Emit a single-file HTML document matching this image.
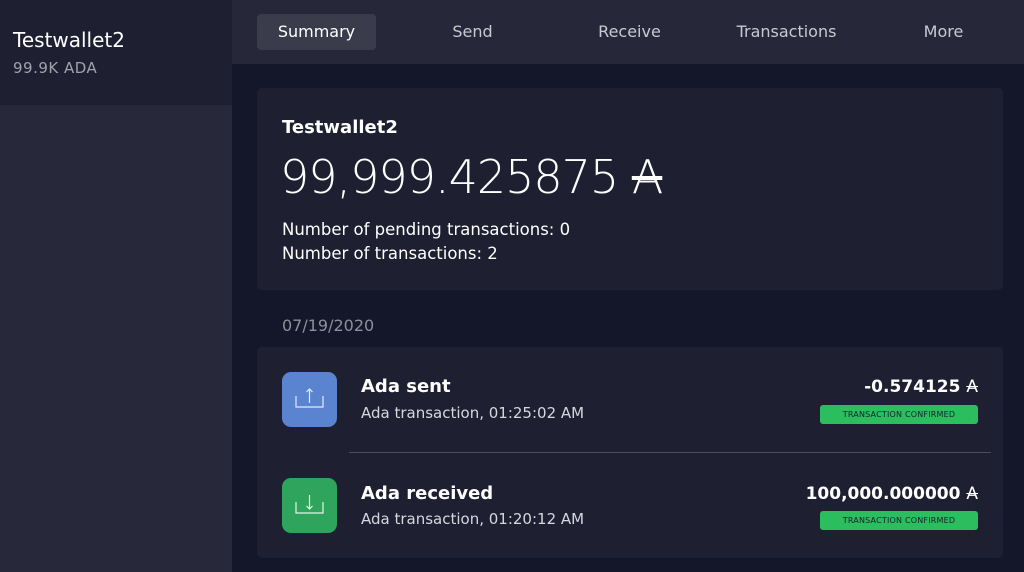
<!DOCTYPE html><html><head><style>
*{margin:0;padding:0;box-sizing:border-box}
body{width:1024px;height:572px;overflow:hidden;background:#14162a;font-family:"DejaVu Sans","Liberation Sans",sans-serif;color:#fff;position:relative}
.side{position:absolute;left:0;top:0;width:232px;height:572px;background:#27283a}
.sel{position:absolute;left:0;top:0;width:232px;height:105px;background:#1e1f31}
.nav{position:absolute;left:232px;top:0;width:792px;height:64px;background:#262839}
.tab{position:absolute;top:14px;height:36px;line-height:36px;font-size:16px;color:#c8c9d2;text-align:center}
.card{position:absolute;background:#1e2032;border-radius:5px}
.ic{position:absolute;left:282px;width:55px;height:55px;border-radius:9px}
.badge{position:absolute;right:46px;width:158px;height:19px;background:#2bbd5e;border-radius:3px;color:#1b2030;font-size:8px;text-align:center;line-height:19px;letter-spacing:.2px}
.amt{position:absolute;right:46px;font-size:17px;font-weight:bold;text-align:right}
</style></head><body>
<div class="side"></div><div class="sel"></div>
<div style="position:absolute;left:13px;top:28px;font-size:20px">Testwallet2</div>
<div style="position:absolute;left:13px;top:59px;font-size:15px;color:#a0a2ad;letter-spacing:.5px">99.9K ADA</div>
<div class="nav"></div>
<div class="tab" style="left:257px;width:119px;background:#3a3c4c;border-radius:4px;color:#fff">Summary</div>
<div class="tab" style="left:413px;width:119px">Send</div>
<div class="tab" style="left:570px;width:119px">Receive</div>
<div class="tab" style="left:727px;width:119px">Transactions</div>
<div class="tab" style="left:884px;width:119px">More</div>
<div class="card" style="left:257px;top:88px;width:746px;height:202px"></div>
<div style="position:absolute;left:282px;top:117px;font-size:18px;font-weight:bold">Testwallet2</div>
<div style="position:absolute;left:280px;top:150px;font-size:46px;font-weight:200;letter-spacing:-1px">99,999.425875 <span style="text-decoration:line-through">A</span></div>
<div style="position:absolute;left:282px;top:218px;font-size:16.5px;line-height:24px">Number of pending transactions: 0<br>Number of transactions: 2</div>
<div style="position:absolute;left:282px;top:316px;font-size:16px;color:#8e909b">07/19/2020</div>
<div class="card" style="left:257px;top:347px;width:746px;height:211px"></div>
<div class="ic" style="top:372px;background:#5b84d0"><svg width="55" height="55" viewBox="0 0 55 55" fill="none" stroke="#e6e9f2" stroke-width="1.2"><path d="M14 24v11h27V24M27.5 31V17M24.5 20l3-3 3 3"/></svg></div>
<div class="ic" style="top:478px;background:#2fa45d"><svg width="55" height="55" viewBox="0 0 55 55" fill="none" stroke="#e6f2ea" stroke-width="1.2"><path d="M14 24v11h27V24M27.5 17v14M24.5 28l3 3 3-3"/></svg></div>
<div style="position:absolute;left:361px;top:376px;font-size:18px;font-weight:bold">Ada sent</div>
<div style="position:absolute;left:361px;top:404px;font-size:15px;color:#d6d7de">Ada transaction, 01:25:02 AM</div>
<div style="position:absolute;left:349px;top:452px;width:642px;height:1px;background:#4a4c5c"></div>
<div style="position:absolute;left:361px;top:483px;font-size:18px;font-weight:bold">Ada received</div>
<div style="position:absolute;left:361px;top:510px;font-size:15px;color:#d6d7de">Ada transaction, 01:20:12 AM</div>
<div class="amt" style="top:377px">-0.574125 <span style="text-decoration:line-through;font-weight:normal">A</span></div>
<div class="badge" style="top:405px">TRANSACTION CONFIRMED</div>
<div class="amt" style="top:484px">100,000.000000 <span style="text-decoration:line-through;font-weight:normal">A</span></div>
<div class="badge" style="top:511px">TRANSACTION CONFIRMED</div>
</body></html>
